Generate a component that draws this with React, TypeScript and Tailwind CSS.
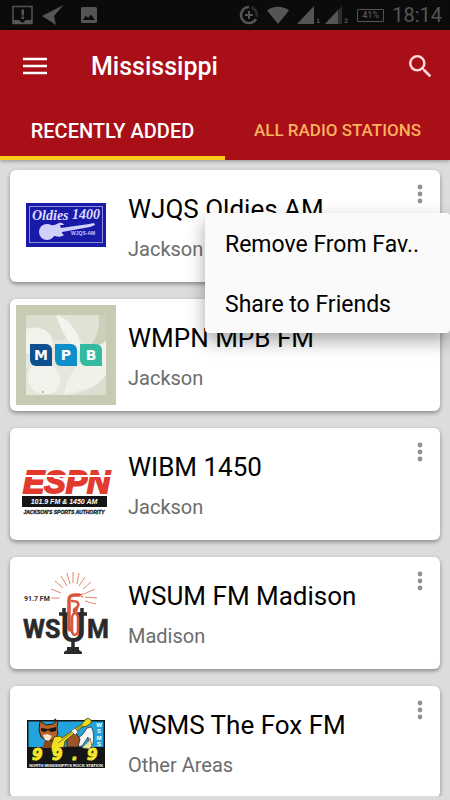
import type { ReactNode } from "react";

function OldiesLogo() {
  return (
    <svg viewBox="0 0 100 100" className="size-full" role="img" aria-label="Oldies 1400">
      <rect x="10" y="27" width="80" height="44" fill="#1a1aa8" />
      <rect x="13.500" y="30.500" width="73" height="36" fill="none" stroke="#8d8de0" strokeWidth="1" />
      <text x="16" y="44" fill="#dcdcff" className="font-['Liberation_Serif',serif] text-[14px] font-bold italic">
        Oldies
      </text>
      <text x="56" y="43" fill="#dcdcff" className="font-['Liberation_Serif',serif] text-[14px] font-bold italic">
        1400
      </text>
      <g fill="#d0d0fa">
        <ellipse cx="31" cy="56" rx="8" ry="8" />
        <path d="M33 48.500c4 2 7 0 10-1.500 2-.500 4 0 5 2h-4l1 3 28-4 5-1 1 2-5 2-28 5c0 1 0 2 2 3-2 2-6 2-9 1-3 0-4 3-8 3z" />
      </g>
      <text x="55" y="59" fill="#c4c4f6" className="font-['Liberation_Sans',sans-serif] text-[5px] font-bold">
        WJQS-AM
      </text>
    </svg>
  );
}

function MpbLogo() {
  return (
    <svg viewBox="0 0 100 100" className="size-full" role="img" aria-label="MPB">
      <rect width="100" height="100" fill="#c8cbb4" />
      <rect x="10" y="10" width="80" height="80" fill="#e6e7dc" />
      <path d="M10 10h30c8 3 14 10 18 20-14 8-34 6-48 2z" fill="#dcdecf" />
      <path d="M40 10h43c1 12-4 24-14 32-8-14-16-26-29-32z" fill="#e0e2d6" />
      <path d="M83 10h7v30c-8-2-14 0-20 4 10-8 14-20 13-34z" fill="#ccd0ba" />
      <path d="M40 10c14 4 24 18 26 38-12-6-20-20-26-38z" fill="#f3f4ee" />
      <path d="M10 24c12-4 25 0 27 14 0 8-16 12-27 10z" fill="#f2f3ec" />
      <path d="M12 72c0-14 14-20 26-10 10 10 8 26-8 27-10 0-18-6-18-17z" fill="#f2f3ed" />
      <path d="M90 36v40c-14 8-30 10-42 14 4-26 22-40 42-54z" fill="#f0f1e9" />
      <path d="M90 70v20H56c14-2 26-10 34-20z" fill="#dcdfd0" />
      <circle cx="27" cy="87" r="0.800" fill="#6e7154" />
      <path d="M14 39h16a6 6 0 0 1 6 6v16H20a6 6 0 0 1-6-6z" fill="#0d4f8f" />
      <path d="M39 39h16a6 6 0 0 1 6 6v16H45a6 6 0 0 1-6-6z" fill="#0e8fca" />
      <path d="M64 39h16a6 6 0 0 1 6 6v16H70a6 6 0 0 1-6-6z" fill="#34baa0" />
      <g fill="#fff" textAnchor="middle" className="font-['DejaVu_Sans',sans-serif] text-[14px] font-bold">
        <text x="25" y="55">M</text>
        <text x="50" y="55">P</text>
        <text x="75" y="55">B</text>
      </g>
    </svg>
  );
}

function EspnLogo() {
  return (
    <svg viewBox="0 0 100 100" className="size-full" role="img" aria-label="ESPN 101.9 FM and 1450 AM">
      <text x="7" y="59" fill="#e23a2e" stroke="#e23a2e" strokeWidth="1.800" className="font-['Liberation_Sans',sans-serif] text-[32px] font-bold italic">
        ESPN
      </text>
      <rect x="4" y="41" width="92" height="2" fill="#fff" />
      <rect x="6" y="62" width="85" height="11" fill="#151515" />
      <text x="48" y="70" fill="#fff" textAnchor="middle" className="font-['Liberation_Sans',sans-serif] text-[7px] font-bold italic">
        101.9 FM &amp; 1450 AM
      </text>
      <text x="48" y="80" fill="#1a1a1a" stroke="#1a1a1a" strokeWidth="0.300" textAnchor="middle" className="font-['Liberation_Sans',sans-serif] text-[5px] font-bold italic">
        JACKSON'S SPORTS AUTHORITY
      </text>
    </svg>
  );
}

function WsumLogo() {
  return (
    <svg viewBox="0 0 100 100" className="size-full" role="img" aria-label="91.7 FM WSUM">
      <g stroke="#dd7a5c" strokeWidth="0.900">
        <path d="M35 35l9 0M35 26l10 4M39 18l8 7M45 13l6 10M51 10l3 11M57 9v11M63 10l-2 11M69 14l-6 9M75 19l-8 7M79 26l-11 5M81 35l-12-1M80 41l-11-3" />
      </g>
      <text x="8" y="38" fill="#2a2a2c" className="font-['Roboto',sans-serif] text-[7px] font-bold">
        91.7 FM
      </text>
      <g fill="#2a2a2c" stroke="#2a2a2c" strokeWidth="0.600" className="font-['Roboto',sans-serif] text-[25px] font-bold">
        <text x="7" y="75">W</text>
        <text x="29" y="75">S</text>
        <text x="71" y="75">M</text>
      </g>
      <text x="44" y="79" fill="#2a2a2c" className="font-['Roboto',sans-serif] text-[40px] font-medium">
        U
      </text>
      <path d="M43 51h10M61 51h10M48 45v8M66 45v8M57 78v7" fill="none" stroke="#2a2a2c" strokeWidth="3.500" />
      <path d="M51 84h12v3l3 2v2H48v-2l3-2z" fill="#2a2a2c" />
      <g fill="none" stroke="#d9553c" strokeLinecap="round">
        <path d="M63 32h-4c-4 0-6 1-6 5v27c0 2 1 3 1.500 3" strokeWidth="3.500" />
        <path d="M56 38c6 0 7 2 6 5s-5 2-4 5 4 2 4 6v13c0 6-6 7-6 0V55c0-6 5-5 5-10" strokeWidth="2.500" />
        <path d="M63 32l4-1M63 32l4 2" strokeWidth="1" />
      </g>
    </svg>
  );
}

function FoxLogo() {
  return (
    <svg viewBox="0 0 100 100" className="size-full" role="img" aria-label="WSMS 99.9">
      <rect x="11" y="28" width="78" height="48" fill="#151515" />
      <rect x="12.500" y="29.500" width="75" height="25.500" fill="#23a3dc" />
      <path d="M30 46l8 1 6 9H26z" fill="#8a4a20" />
      <path d="M24 29l6 4 7-1 5-4-1 9 1 5-5 6-6 1-6-4-2-7z" fill="#b8622b" stroke="#2a1c12" strokeWidth="1" />
      <path d="M25 36l7 1 8-2v4l-5 1-3-2-3 2-4-1z" fill="#151515" />
      <path d="M27 43l4-1 5 2-3 5-4-1z" fill="#f4e6d4" />
      <path d="M37 29l3-2" stroke="#2a1c12" strokeWidth="1.200" />
      <path d="M58 47c7-1 10-6 13-11l4-1c3 4 3 11 2 17l-4 2-1-9-6 9-9 1z" fill="#f6f6f4" stroke="#333" strokeWidth="0.800" />
      <path d="M51 43l7-5 6 9-2 8-11 0z" fill="#9c5526" stroke="#2a1c12" strokeWidth="0.800" />
      <path d="M35 54l3-9 6-1 2 2 20-14 4-5c3-1 6 0 5 4l-4 3-5 1-17 14-1 6-5 1-3 5-4-1z" fill="#f1de24" stroke="#4d460d" strokeWidth="0.900" />
      <path d="M42 51l25-18" stroke="#6e6612" strokeWidth="0.800" />
      <path d="M55 39l4-3 3 4-3 3z" fill="#f6f6f4" stroke="#333" strokeWidth="0.500" />
      <path d="M66 56c3-5 6-4 8-10l2 8-3 3z" fill="#e9e6a0" stroke="#333" strokeWidth="0.500" />
      <g fill="#fff" textAnchor="middle" className="font-['Liberation_Sans',sans-serif] text-[6px] font-bold">
        <text x="83" y="35">W</text>
        <text x="83" y="41">S</text>
        <text x="83" y="48">M</text>
        <text x="83" y="54">S</text>
      </g>
      <g fill="#f5e72b" stroke="#f5e72b" className="font-['DejaVu_Sans',sans-serif] text-[15px] font-bold italic">
        <text x="16" y="68">9</text>
        <text x="36" y="68">9</text>
        <text x="56" y="68">.</text>
        <text x="71" y="68">9</text>
      </g>
      <text x="50" y="75" fill="#fff" textAnchor="middle" className="font-['Liberation_Sans',sans-serif] text-[4px] font-bold">
        NORTH MISSISSIPPI'S ROCK STATION
      </text>
    </svg>
  );
}

type Station = { name: string; place: string; logo: ReactNode };

const stations: Station[] = [
  { name: "WJQS Oldies AM", place: "Jackson", logo: <OldiesLogo /> },
  { name: "WMPN MPB FM", place: "Jackson", logo: <MpbLogo /> },
  { name: "WIBM 1450", place: "Jackson", logo: <EspnLogo /> },
  { name: "WSUM FM Madison", place: "Madison", logo: <WsumLogo /> },
  { name: "WSMS The Fox FM", place: "Other Areas", logo: <FoxLogo /> },
];

function StatusBar() {
  return (
    <div className="flex h-[30px] shrink-0 items-center justify-between bg-[#0b0b0b] pl-3 pr-2 text-[#555]">
      <div className="flex items-center gap-2">
        <svg viewBox="0 0 22 20" className="h-5 w-[22px]" aria-hidden="true">
          <path d="M1 1.500h19v17H1z" fill="none" stroke="currentColor" strokeWidth="1.500" />
          <path d="M1 15h6l3.500 3 3.500-3h6v4H1z" fill="currentColor" />
          <path d="M9.500 4.500h2.500v6H9.500zM9.500 11.500h2.500v2.500H9.500z" fill="currentColor" />
        </svg>
        <svg viewBox="0 0 22 20" className="h-5 w-[22px]" aria-hidden="true">
          <path d="M21.500 0L0 11l14 9-2-9z" fill="currentColor" />
        </svg>
        <svg viewBox="0 0 18 18" className="ml-2 size-[18px]" aria-hidden="true">
          <path fillRule="evenodd" d="M2.500 1h13A1.500 1.500 0 0 1 17 2.500v13a1.500 1.500 0 0 1-1.500 1.500h-13A1.500 1.500 0 0 1 1 15.500v-13A1.500 1.500 0 0 1 2.500 1zM3 14h12l-4-5.500-3 3.500-2-2.500z" fill="currentColor" />
        </svg>
      </div>
      <div className="flex items-center">
        <svg viewBox="0 0 20 20" className="mr-2 size-5" aria-hidden="true">
          <path d="M10 2a8 8 0 1 0 7 12" fill="none" stroke="currentColor" strokeWidth="2.500" />
          <path d="M12 2.300a8 8 0 0 1 5.500 9.500" fill="none" stroke="#2c2c2c" strokeWidth="2.500" />
          <path d="M10 6v8M6 10h8" stroke="currentColor" strokeWidth="2" />
        </svg>
        <svg viewBox="0 0 22 18" className="mr-2 h-[18px] w-[22px]" aria-hidden="true">
          <path d="M0 4.500C6-.5 16-.5 22 4.500L11 18z" fill="currentColor" />
        </svg>
        <svg viewBox="0 0 24 18" className="mr-1 h-[18px] w-6" aria-hidden="true">
          <path d="M17 0v18H0z" fill="currentColor" />
          <text x="19" y="17" fill="currentColor" className="font-['DejaVu_Sans',sans-serif] text-[6px] font-bold">1</text>
        </svg>
        <svg viewBox="0 0 24 18" className="mr-2 h-[18px] w-6" aria-hidden="true">
          <path d="M17 0v18H0z" fill="#2c2c2c" />
          <path d="M13 4v14H0z" fill="currentColor" />
          <text x="19" y="17" fill="currentColor" className="font-['DejaVu_Sans',sans-serif] text-[6px] font-bold">2</text>
        </svg>
        <span className="mr-2 flex h-[13px] w-[27px] items-center justify-center rounded-[1px] border border-[#555] text-[9px] leading-none font-medium">
          41%
        </span>
        <span className="text-[20px] leading-[30px]">18:14</span>
      </div>
    </div>
  );
}

function StationCard({ name, place, logo }: Station) {
  return (
    <li className="flex h-28 shrink-0 items-start rounded-md bg-white p-1.5 shadow-[0_2px_4px_rgba(0,0,0,0.38)]">
      <div className="size-[100px] shrink-0">{logo}</div>
      <div className="ml-3 min-w-0 flex-1 pt-[17px]">
        <h2 className="truncate text-[26px] leading-8 text-black">{name}</h2>
        <p className="mt-2 text-[20px] leading-8 text-[#6c6c6c]">{place}</p>
      </div>
      <button type="button" aria-label={`Options for ${name}`} className="flex h-9 w-7 shrink-0 items-center justify-center">
        <svg viewBox="0 0 6 20" className="h-5 w-1.5" fill="#929292" aria-hidden="true">
          <circle cx="3" cy="3" r="2.400" />
          <circle cx="3" cy="10" r="2.400" />
          <circle cx="3" cy="17" r="2.400" />
        </svg>
      </button>
    </li>
  );
}

export default function App() {
  return (
    <div className="relative flex h-screen flex-col overflow-hidden bg-[#dcdcdc] font-['Roboto',sans-serif]">
      <StatusBar />
      <header className="z-10 shrink-0 bg-[#a90f17] text-white shadow-[0_1px_4px_rgba(0,0,0,0.35)]">
        <div className="flex h-[72px] items-center pr-4 pl-[23px]">
          <button type="button" aria-label="Open menu">
            <svg viewBox="0 0 24 18" className="h-[18px] w-6" aria-hidden="true">
              <path d="M0 2h24M0 9h24M0 16h24" stroke="#fff" strokeWidth="2.500" />
            </svg>
          </button>
          <h1 className="ml-11 flex-1 pt-0.5 text-[25px] leading-8 font-medium">Mississippi</h1>
          <button type="button" aria-label="Search">
            <svg viewBox="3 3 18 18" className="mr-0.5 size-[23px]" fill="#ffdada" aria-hidden="true">
              <path d="M15.500 14h-.79l-.28-.27A6.471 6.471 0 0 0 16 9.500 6.500 6.500 0 1 0 9.500 16c1.610 0 3.090-.59 4.230-1.570l.27.280v.79l5 4.990L20.490 19l-4.990-5zm-6 0C7.010 14 5 11.990 5 9.500S7.010 5 9.500 5 14 7.010 14 9.500 11.990 14 9.500 14z" />
            </svg>
          </button>
        </div>
        <nav className="grid h-[58px] grid-cols-2 font-medium">
          <button type="button" className="border-b-4 border-[#fbcb1c] pt-1 text-[20px]">
            RECENTLY ADDED
          </button>
          <button type="button" className="border-b-4 border-transparent pt-1 text-[17px] text-[#fbb060]">
            ALL RADIO STATIONS
          </button>
        </nav>
      </header>
      <main className="mb-1 min-h-0 flex-1 overflow-hidden">
        <ul className="flex flex-col gap-[17px] px-[10px] pt-[10px]">
          {stations.map((station) => (
            <StationCard key={station.name} {...station} />
          ))}
        </ul>
      </main>
      <div
        role="menu"
        className="absolute top-[213px] right-0 z-20 flex w-[245px] flex-col rounded-sm bg-[#fafafa] text-[23px] text-black shadow-[0_8px_18px_rgba(0,0,0,0.35)]"
      >
        <button type="button" role="menuitem" className="h-[60px] pt-1 pl-5 text-left">
          Remove From Fav..
        </button>
        <button type="button" role="menuitem" className="h-[60px] pt-1 pl-5 text-left">
          Share to Friends
        </button>
      </div>
    </div>
  );
}
